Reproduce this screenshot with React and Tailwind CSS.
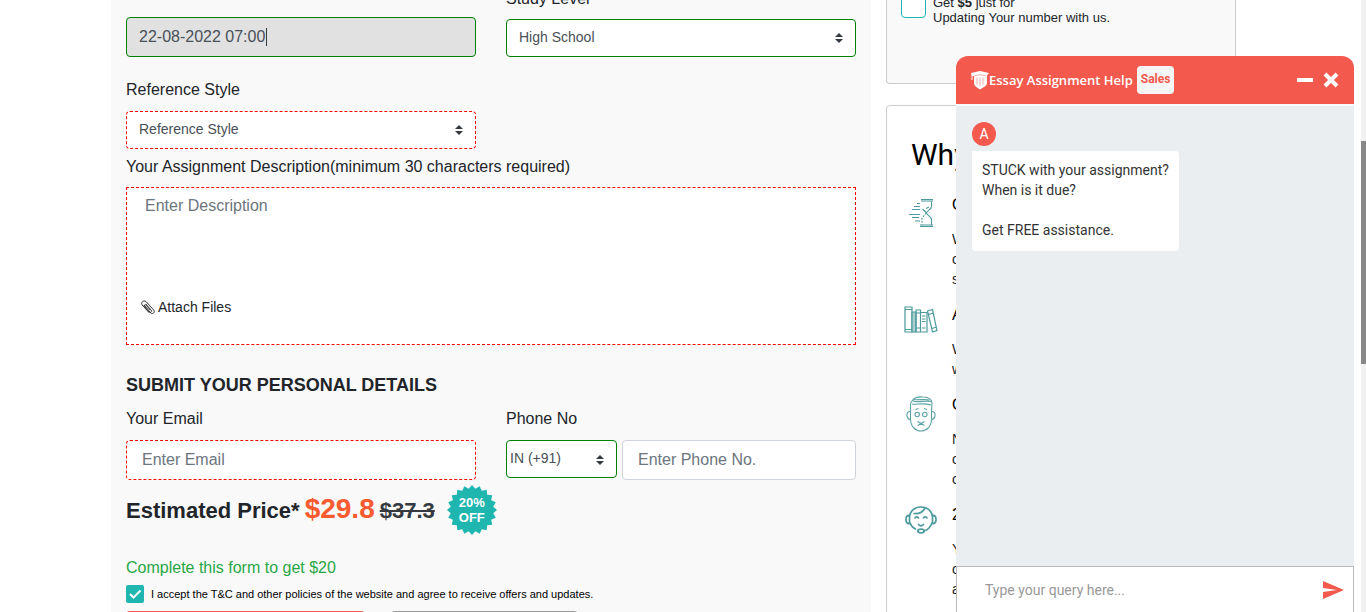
import React from "react";

const SANS = "font-['Liberation_Sans',Arial,sans-serif]";

function Caret() {
  return (
    <svg viewBox="0 0 4 5" className="pointer-events-none absolute right-[13px] top-1/2 h-[10px] w-2 -translate-y-1/2" aria-hidden="true">
      <path fill="#343a40" d="M2 0L0 2h4zm0 5L0 3h4z" />
    </svg>
  );
}

function SelectBox({ id, label, value, className, wrapClass }) {
  return (
    <div className={"relative " + wrapClass}>
      <select
        id={id}
        aria-label={label}
        className={"block h-[38px] w-full appearance-none rounded border bg-white pb-[2px] text-sm text-[#495057] outline-none " + className}
      >
        <option>{value}</option>
      </select>
      <Caret />
    </div>
  );
}

function Burst() {
  const points = Array.from({ length: 40 }, (_, i) => {
    const r = i % 2 === 0 ? 25 : 21.5;
    const a = (Math.PI * i) / 20;
    return `${(25 + r * Math.sin(a)).toFixed(2)},${(25 - r * Math.cos(a)).toFixed(2)}`;
  }).join(" ");
  return (
    <div className="relative ml-3 grid size-[50px] place-items-center text-center text-[13px] font-bold leading-[15px] text-white">
      <svg viewBox="0 0 50 50" className="absolute inset-0 size-full" aria-hidden="true">
        <polygon points={points} fill="#1fb6b0" />
      </svg>
      <span className="relative">20%<br />OFF</span>
    </div>
  );
}

function Clip() {
  return (
    <svg viewBox="0 0 14 15" className="h-[15px] w-[14px]" fill="none" stroke="#333" strokeWidth="1" strokeLinecap="round" aria-hidden="true">
      <path d="M3.300 5.300 9.800 12.900c1.700 1.900 4.700-.7 3-2.700L5.400 1.900C3.200-.5-.8 2.300 1.200 4.900l6.600 7.500" />
      <path d="M9.200 9.900 5.200 5.200c-1-1.200-2.700.2-1.700 1.400l4.800 5.500c1 1.200 3.200-.3 2-1.700L5 4.200" />
    </svg>
  );
}

function HourglassIcon() {
  return (
    <svg viewBox="0 -2 26 32" className="h-8 w-[26px]" fill="none" stroke="#4d9a9c" strokeWidth="1.1" aria-hidden="true">
      <path d="M13 1.500h12M13 3h12M12 27h13M12 28.500h13" />
      <path d="M23.500 3.500v5c0 3-5 4.500-5 6.500s5 3.500 5 6.500V27M14.500 11l4 4" />
      <path d="M18.500 15l-4.500 5v6.500" strokeDasharray="2 1.200" />
      <path d="M18 10.500l3-1.500" />
      <path d="M9 5.500h3M6 8.500h6M4 11.500h8M1 16.500h11M4 19.500h7M7 23h5" strokeWidth="1" />
    </svg>
  );
}

function BooksIcon() {
  return (
    <svg viewBox="0 0 34 28" className="h-7 w-[34px]" fill="none" stroke="#4d9a9c" strokeWidth="1.200" aria-hidden="true">
      <path d="M1 1h7v25H1zM1 3.500h7M1 23.500h7" />
      <path d="M8 6h4v20H8z" fill="#a9cfd0" />
      <path d="M12 4h4.500v22H12zM12 7h4.500M12 22h4.500M16.500 6.500H23V26h-6.500zM18 10h3.500M18 13h3.500M18 15.500h3.500M18 22h3.500" />
      <path d="M23.500 5l5-1.500L33 24.500l-4.500 1.500zM24.500 8.500l5-1.500M28 22.500l4.500-1.500" />
    </svg>
  );
}

function FaceIcon() {
  return (
    <svg viewBox="0 0 30 36" className="h-9 w-[30px]" fill="none" stroke="#5ba3a6" strokeWidth="1.1" aria-hidden="true">
      <path d="M4.500 15V8.500c0-3 2.500-3.500 3-5.500C10 1 14 .700 17 1c5 .300 9 2 9 6l-.500 8" />
      <path d="M7 5c4 2 14-1 18.500.500M6 8c5 1 11-1.500 19 1M7.500 3.500c5 1 11-1 16 .5" />
      <path d="M4.500 13V23c0 8 5.500 12 10.500 12s10.500-4 10.500-12V13" />
      <path d="M4.500 15.500C-.500 15 0 23 4.500 23.500M25.500 15.500c5-.500 4.500 7.500 0 8M9.500 13.500l3-1M18 12.500l3 1" />
      <circle cx="11.200" cy="18.500" r="2.200" />
      <circle cx="18.800" cy="18.500" r="2.200" />
      <path d="M11.500 25.500c2 1 4.500 3 7 4M18.500 25.500c-2.500 1-4 3-7 4" />
    </svg>
  );
}

function AgentIcon() {
  return (
    <svg viewBox="0 0 32 28" className="h-7 w-8" fill="none" stroke="#4d9a9c" strokeWidth="1.700" strokeLinecap="round" aria-hidden="true">
      <path d="M4.500 10C6 4 10.500 1 16 1s10 3 11.500 9M5 17c1 2.500 3 5 5.500 6M27 17c-1.500 4-4.500 7-8 8" />
      <path d="M9 7.500c5 .5 9-1.500 11-5.500" />
      <path d="M4.500 9.500C2 9 1 11 1 13.500S2 18 4.500 17.500zM27.500 9.500C30 9 31 11 31 13.500S30 18 27.500 17.500z" />
      <path d="M10 12c.5-1.500 3-1.500 3.500 0M18.500 12c.5-1.500 3-1.500 3.500 0M13.500 18.500c1.500 1.500 3.500 1.500 5 0" />
      <ellipse cx="16" cy="25" rx="3.200" ry="1.800" />
    </svg>
  );
}

const REASONS = [
  { Icon: HourglassIcon, title: "On Time", lines: ["We", "on", "so"] },
  { Icon: BooksIcon, title: "All", lines: ["We", "work"] },
  { Icon: FaceIcon, title: "Original", lines: ["No", "or", "our"] },
  { Icon: AgentIcon, title: "24x7", lines: ["You", "or", "any"] },
];

function OrderForm() {
  return (
    <form className="min-w-0 flex-1 bg-[#f9f9f9] px-[15px] text-base text-[#212529]" onSubmit={(e) => e.preventDefault()}>
      <div className="grid grid-cols-2 items-end gap-x-[30px]">
        <div className="relative">
          <input
            aria-label="Deadline"
            defaultValue="22-08-2022 07:00"
            className="block h-10 w-full rounded border border-[#008000] bg-[#e1e1e1] px-3 text-[#495057] outline-none"
          />
          <span className="absolute left-[140px] top-[11px] h-[18px] w-px bg-[#343a40]" />
        </div>
        <div>
          <label htmlFor="level" className="mb-2 block">Study Level</label>
          <SelectBox id="level" value="High School" wrapClass="w-full" className="border-[#008000] px-3" />
        </div>
      </div>

      <div className="mt-[21px] grid grid-cols-2 gap-x-[30px]">
        <div>
          <label htmlFor="style" className="mb-[9px] block">Reference Style</label>
          <SelectBox id="style" value="Reference Style" wrapClass="w-full" className="border-dashed border-[#f00] px-3" />
        </div>
      </div>

      <label htmlFor="desc" className="mb-2 mt-[6px] block">Your Assignment Description(minimum 30 characters required)</label>
      <div className="h-[158px] border border-dashed border-[#f00] bg-white">
        <textarea id="desc" placeholder="Enter Description" className="block h-[109px] w-full resize-none px-[18px] py-[6px] outline-none placeholder:text-[#6c757d]" />
        <button type="button" className="ml-[14px] flex items-center gap-[3px] text-sm leading-5">
          <Clip />
          Attach Files
        </button>
      </div>

      <h2 className="mt-[26px] text-lg font-bold leading-7">SUBMIT YOUR PERSONAL DETAILS</h2>
      <div className="mt-2 grid grid-cols-2 gap-x-[30px]">
        <div>
          <label htmlFor="email" className="mb-[9px] block">Your Email</label>
          <input id="email" type="email" placeholder="Enter Email" className="block h-10 w-full rounded border border-dashed border-[#f00] bg-white px-[15px] outline-none placeholder:text-[#6c757d]" />
        </div>
        <div>
          <label htmlFor="phone" className="mb-[9px] block">Phone No</label>
          <div className="flex gap-[5px]">
            <SelectBox id="country" label="Country code" value="IN (+91)" wrapClass="w-[111px] shrink-0" className="border-[#008000] px-[3px]" />
            <input id="phone" type="tel" placeholder="Enter Phone No." className="block h-10 w-full min-w-0 rounded border border-[#ced4da] bg-white px-[15px] outline-none placeholder:text-[#6c757d]" />
          </div>
        </div>
      </div>

      <div className="mt-[5px] flex items-center">
        <p className="flex items-baseline gap-[5px] text-[22px] font-bold leading-9">
          Estimated Price*
          <span className="text-[28px] text-[#fa5a30]">$29.8</span>
          <s className="text-[#343a40]">$37.3</s>
        </p>
        <Burst />
      </div>

      <p className="mt-[21px] text-[#28a745]">Complete this form to get $20</p>
      <label className="mt-[5px] flex items-center gap-[7px] text-[11px] leading-[18px] text-black">
        <span className="relative size-[18px]">
          <input type="checkbox" defaultChecked className="block size-[18px] appearance-none rounded-[2px] bg-[#1fb6b0]" />
          <svg viewBox="0 0 18 18" className="pointer-events-none absolute inset-0" fill="none" stroke="#fff" strokeWidth="2" aria-hidden="true">
            <path d="M4 9l3.500 3.500L14.500 5.500" />
          </svg>
        </span>
        I accept the T&amp;C and other policies of the website and agree to receive offers and updates.
      </label>
      <div className="mt-2 flex gap-[26px]">
        <button type="submit" aria-label="Submit" className="h-10 w-[239px] rounded bg-[#f3594d]" />
        <button type="button" aria-label="Back" className="h-10 w-[187px] rounded bg-[#999]" />
      </div>
    </form>
  );
}

function Sidebar() {
  return (
    <aside className="flex w-[350px] shrink-0 flex-col gap-[21px] text-[#212529]">
      <div className="h-[97px] rounded-b border border-t-0 border-[#ccc] bg-[#f9f9f9] px-[14px] pt-[6px]">
        <label className="flex items-start gap-[7px] text-[13px] leading-[15px]">
          <input type="checkbox" className="block size-[25px] shrink-0 appearance-none rounded border border-[#1fb6b0] bg-white" />
          <span className="pt-[2px]">Get <b>$5</b> just for<br />Updating Your number with us.</span>
        </label>
      </div>
      <section className="min-h-[560px] rounded border border-[#ccc] bg-white">
        <h2 className="ml-6 mt-[29px] font-['Roboto',sans-serif] text-[30px] leading-10 text-black">Why Us</h2>
        <ul className="mt-[15px] flex flex-col gap-[11px] text-sm leading-5">
          {REASONS.map(({ Icon, title, lines }) => (
            <li key={title} className="flex gap-3">
              <span className="mt-[6px] flex w-[53px] justify-end">
                <span className="flex w-[38px] justify-center"><Icon /></span>
              </span>
              <div>
                <h3 className="mb-[14px] pt-[5px] text-base font-medium leading-5 text-black">{title}</h3>
                {lines.map((l) => <p key={l}>{l}</p>)}
              </div>
            </li>
          ))}
        </ul>
      </section>
    </aside>
  );
}

function Chat() {
  return (
    <section className="fixed bottom-0 right-3 top-14 flex w-[398px] flex-col font-['Roboto',sans-serif] text-sm leading-5 text-[#333]">
      <header className="flex h-12 shrink-0 items-center rounded-t-xl bg-[#f3594d] pl-[15px] pr-[15px] text-white">
        <svg viewBox="0 0 18 20" className="h-5 w-[18px]" aria-hidden="true">
          <path d="M0 3 9 1l9 2-2 2.500V13c0 3-4 4.500-7 6.500C6 17.500 3 16 3 13V6H1.500v4H.5V5z" fill="#fff" />
          <path d="M3 6c4-1.500 8-1.500 12 0M6 7.500v7M9 7.500v9M12 7.500v7" stroke="#f3594d" strokeWidth=".5" fill="none" />
        </svg>
        <span className="font-['Open_Sans',sans-serif] text-[13px] font-semibold">Essay Assignment Help</span>
        <span className="ml-1 h-7 rounded bg-[#f5f5f5] px-1 text-xs font-bold leading-[26px] text-[#f3594d]">Sales</span>
        <button type="button" aria-label="Minimize" className="ml-auto h-4 w-4 text-white">
          <svg viewBox="0 0 16 16" className="size-4"><path d="M0 6h16v4H0z" fill="currentColor" /></svg>
        </button>
        <button type="button" aria-label="Close" className="ml-[10px] h-4 w-4">
          <svg viewBox="0 0 16 16" className="size-4"><path d="M2 2l12 12M14 2L2 14" stroke="currentColor" strokeWidth="4" /></svg>
        </button>
      </header>
      <div className="flex-1 border-t-2 border-[#f8fafb] bg-[#eaeef1] px-4 pt-4">
        <div className="size-6 rounded-full bg-[#f3594d] text-center leading-6 text-white">A</div>
        <p className="mt-[5px] w-fit rounded rounded-tl-none bg-white px-[10px] pb-[11px] pt-[9px]">
          STUCK with your assignment?<br />When is it due?<br /><br />Get FREE assistance.
        </p>
      </div>
      <div className="flex h-[46px] shrink-0 items-center border border-b-0 border-[#b9bbbd] bg-white pl-7 pr-[9px]">
        <input aria-label="Message" placeholder="Type your query here..." className="h-full min-w-0 flex-1 outline-none placeholder:text-[#999]" />
        <button type="button" aria-label="Send">
          <svg viewBox="0 0 21 18" className="h-[18px] w-[21px]"><path d="M0 0l21 9L0 18v-7l14-2L0 7z" fill="#f3594d" /></svg>
        </button>
      </div>
    </section>
  );
}

export default function App() {
  return (
    <div className={"flex h-screen overflow-hidden bg-white " + SANS}>
      <main className="min-w-0 flex-1">
        <div className="mx-auto -mt-[13px] flex max-w-[1139px] gap-[15px] pr-[14px]">
          <OrderForm />
          <Sidebar />
        </div>
      </main>
      <div className="w-[5px] bg-[#f1f1f1] pt-[141px]">
        <div className="h-[223px] bg-[#888]" />
      </div>
      <Chat />
    </div>
  );
}
